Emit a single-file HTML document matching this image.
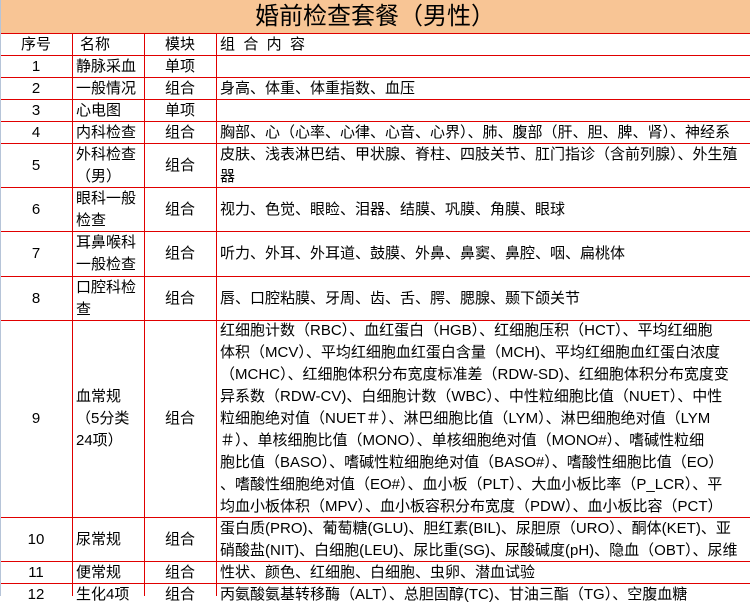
<!DOCTYPE html>
<html><head><meta charset="utf-8"><style>
body{margin:0;width:750px;height:596px;overflow:hidden;background:#fff;font-family:"Liberation Sans","Noto Sans CJK SC",sans-serif;color:#000;position:relative;}
.title{position:absolute;left:0;top:0;width:750px;height:33px;background:#f8c595;text-align:center;font-size:24px;line-height:34px;}
.h{position:absolute;left:0;width:750px;height:1px;background:#e00000;}
.v{position:absolute;top:33px;width:1px;height:563px;background:#e00000;}
.cell{position:absolute;display:flex;align-items:center;font-size:15px;line-height:22px;white-space:nowrap;}
.c{justify-content:center;}
.lb{position:absolute;left:0;top:0;width:1px;height:596px;background:#b6c4d8;}
</style></head><body>
<div class="title">婚前检查套餐（男性）</div>
<div class="h" style="top:33px"></div><div class="h" style="top:55px"></div><div class="h" style="top:77px"></div><div class="h" style="top:99px"></div><div class="h" style="top:121px"></div><div class="h" style="top:143px"></div><div class="h" style="top:187px"></div><div class="h" style="top:231px"></div><div class="h" style="top:276px"></div><div class="h" style="top:320px"></div><div class="h" style="top:517px"></div><div class="h" style="top:561px"></div><div class="h" style="top:583px"></div>
<div class="v" style="left:72px"></div><div class="v" style="left:144px"></div><div class="v" style="left:216px"></div>
<div class="lb"></div>

<div class="cell c" style="left:0;width:72px;top:34px;height:21px">序号</div>
<div class="cell" style="left:80px;top:34px;height:21px">名称</div>
<div class="cell c" style="left:144px;width:72px;top:34px;height:21px">模块</div>
<div class="cell" style="left:220px;top:34px;height:21px">组&nbsp;&nbsp;合&nbsp;&nbsp;内&nbsp;&nbsp;容</div>

<div class="cell c" style="left:0;width:72px;top:56px;height:21px">1</div>
<div class="cell" style="left:76px;top:56px;height:21px">静脉采血</div>
<div class="cell c" style="left:144px;width:72px;top:56px;height:21px">单项</div>

<div class="cell c" style="left:0;width:72px;top:78px;height:21px">2</div>
<div class="cell" style="left:76px;top:78px;height:21px">一般情况</div>
<div class="cell c" style="left:144px;width:72px;top:78px;height:21px">组合</div>
<div class="cell" style="left:220px;top:78px;height:21px">身高、体重、体重指数、血压</div>

<div class="cell c" style="left:0;width:72px;top:100px;height:21px">3</div>
<div class="cell" style="left:76px;top:100px;height:21px">心电图</div>
<div class="cell c" style="left:144px;width:72px;top:100px;height:21px">单项</div>

<div class="cell c" style="left:0;width:72px;top:122px;height:21px">4</div>
<div class="cell" style="left:76px;top:122px;height:21px">内科检查</div>
<div class="cell c" style="left:144px;width:72px;top:122px;height:21px">组合</div>
<div class="cell" style="left:220px;top:122px;height:21px">胸部、心（心率、心律、心音、心界）、肺、腹部（肝、胆、脾、肾）、神经系</div>

<div class="cell c" style="left:0;width:72px;top:144px;height:43px">5</div>
<div class="cell" style="left:76px;top:144px;height:43px">外科检查<br>（男）</div>
<div class="cell c" style="left:144px;width:72px;top:144px;height:43px">组合</div>
<div class="cell" style="left:220px;top:144px;height:43px">皮肤、浅表淋巴结、甲状腺、脊柱、四肢关节、肛门指诊（含前列腺）、外生殖<br>器</div>

<div class="cell c" style="left:0;width:72px;top:188px;height:43px">6</div>
<div class="cell" style="left:76px;top:188px;height:43px">眼科一般<br>检查</div>
<div class="cell c" style="left:144px;width:72px;top:188px;height:43px">组合</div>
<div class="cell" style="left:220px;top:188px;height:43px">视力、色觉、眼睑、泪器、结膜、巩膜、角膜、眼球</div>

<div class="cell c" style="left:0;width:72px;top:232px;height:44px">7</div>
<div class="cell" style="left:76px;top:232px;height:44px">耳鼻喉科<br>一般检查</div>
<div class="cell c" style="left:144px;width:72px;top:232px;height:44px">组合</div>
<div class="cell" style="left:220px;top:232px;height:44px">听力、外耳、外耳道、鼓膜、外鼻、鼻窦、鼻腔、咽、扁桃体</div>

<div class="cell c" style="left:0;width:72px;top:277px;height:43px">8</div>
<div class="cell" style="left:76px;top:277px;height:43px">口腔科检<br>查</div>
<div class="cell c" style="left:144px;width:72px;top:277px;height:43px">组合</div>
<div class="cell" style="left:220px;top:277px;height:43px">唇、口腔粘膜、牙周、齿、舌、腭、腮腺、颞下颌关节</div>

<div class="cell c" style="left:0;width:72px;top:321px;height:196px">9</div>
<div class="cell" style="left:76px;top:321px;height:196px">血常规<br>（5分类<br>24项）</div>
<div class="cell c" style="left:144px;width:72px;top:321px;height:196px">组合</div>
<div class="cell" style="left:220px;top:321px;height:196px">红细胞计数（RBC）、血红蛋白（HGB）、红细胞压积（HCT）、平均红细胞<br>体积（MCV）、平均红细胞血红蛋白含量（MCH)、平均红细胞血红蛋白浓度<br>（MCHC）、红细胞体积分布宽度标准差（RDW-SD)、红细胞体积分布宽度变<br>异系数（RDW-CV)、白细胞计数（WBC）、中性粒细胞比值（NUET）、中性<br>粒细胞绝对值（NUET＃）、淋巴细胞比值（LYM）、淋巴细胞绝对值（LYM<br>＃）、单核细胞比值（MONO）、单核细胞绝对值（MONO#）、嗜碱性粒细<br>胞比值（BASO）、嗜碱性粒细胞绝对值（BASO#）、嗜酸性细胞比值（EO）<br>、嗜酸性细胞绝对值（EO#）、血小板（PLT）、大血小板比率（P_LCR）、平<br>均血小板体积（MPV）、血小板容积分布宽度（PDW）、血小板比容（PCT）</div>

<div class="cell c" style="left:0;width:72px;top:518px;height:43px">10</div>
<div class="cell" style="left:76px;top:518px;height:43px">尿常规</div>
<div class="cell c" style="left:144px;width:72px;top:518px;height:43px">组合</div>
<div class="cell" style="left:220px;top:518px;height:43px">蛋白质(PRO)、葡萄糖(GLU)、胆红素(BIL)、尿胆原（URO）、酮体(KET)、亚<br>硝酸盐(NIT)、白细胞(LEU)、尿比重(SG)、尿酸碱度(pH)、隐血（OBT）、尿维</div>

<div class="cell c" style="left:0;width:72px;top:562px;height:21px">11</div>
<div class="cell" style="left:76px;top:562px;height:21px">便常规</div>
<div class="cell c" style="left:144px;width:72px;top:562px;height:21px">组合</div>
<div class="cell" style="left:220px;top:562px;height:21px">性状、颜色、红细胞、白细胞、虫卵、潜血试验</div>

<div class="cell c" style="left:0;width:72px;top:584px;height:21px">12</div>
<div class="cell" style="left:76px;top:584px;height:21px">生化4项</div>
<div class="cell c" style="left:144px;width:72px;top:584px;height:21px">组合</div>
<div class="cell" style="left:220px;top:584px;height:21px">丙氨酸氨基转移酶（ALT）、总胆固醇(TC)、甘油三酯（TG）、空腹血糖</div>
</body></html>
